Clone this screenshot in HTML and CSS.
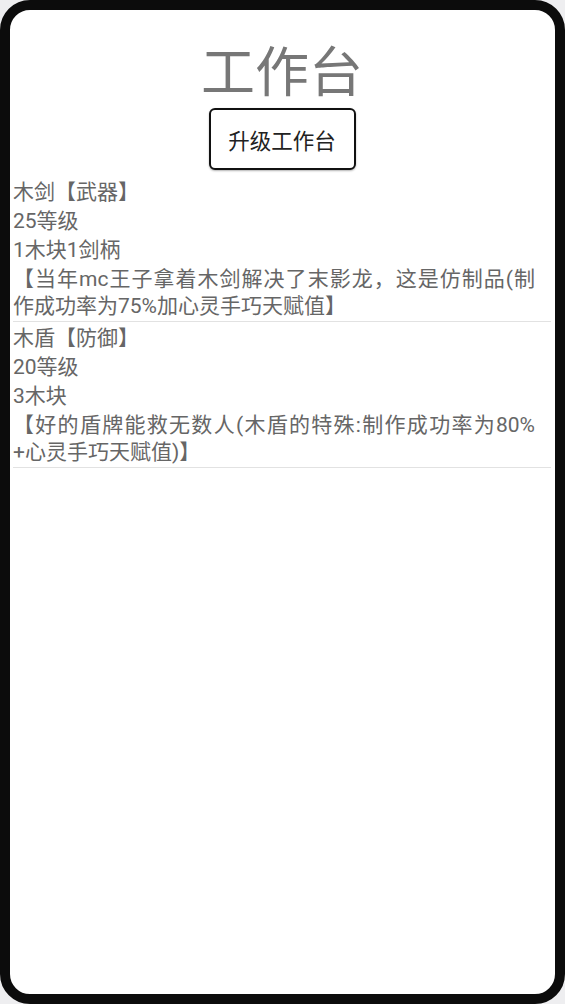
FILE: index.html
```html
<!DOCTYPE html>
<html lang="zh">
<head>
<meta charset="utf-8">
<title>工作台</title>
<link rel="stylesheet" href="styles.css">
</head>
<body>
<div class="frame">
  <div class="screen">
    <h1 class="title">工作台</h1>
    <div class="actions"><button class="upgrade">升级工作台</button></div>
    <div class="item">
      <div class="line">木剑【武器】</div>
      <div class="line">25等级</div>
      <div class="line">1木块1剑柄</div>
      <div class="line desc"><span class="row full">【当年mc王子拿着木剑解决了末影龙，这是仿制品(制</span><span class="row">作成功率为75%加心灵手巧天赋值】</span></div>
    </div>
    <div class="item">
      <div class="line">木盾【防御】</div>
      <div class="line">20等级</div>
      <div class="line">3木块</div>
      <div class="line desc"><span class="row full">【好的盾牌能救无数人(木盾的特殊:制作成功率为80%</span><span class="row">+心灵手巧天赋值)】</span></div>
    </div>
  </div>
</div>
</body>
</html>
```
FILE: styles.css
```css
html, body {
  margin: 0;
  padding: 0;
  background: #eeeef0;
}
body {
  font-family: Roboto, "Noto Sans CJK SC", sans-serif;
}
.frame {
  width: 565px;
  height: 1004px;
  box-sizing: border-box;
  border: 10px solid #0c0c0c;
  border-radius: 30px;
  background: #ffffff;
  overflow: hidden;
}
.screen {
  padding: 0 4px 0 3px;
}
.title {
  margin: 0;
  padding-top: 29px;
  font-size: 54px;
  line-height: 69px;
  font-weight: normal;
  color: #777777;
  text-align: center;
}
.actions {
  display: flex;
  justify-content: center;
  margin-bottom: 6px;
}
.upgrade {
  width: 147px;
  height: 62px;
  box-sizing: border-box;
  border: 2px solid #111111;
  border-radius: 6px;
  background: #ffffff;
  box-shadow: 0 1px 2px rgba(0,0,0,0.3);
  font-family: Roboto, "Noto Sans CJK SC", sans-serif;
  font-size: 21.5px;
  color: #222222;
  padding: 0;
}
.item {
  padding: 3px 0 1px;
  border-bottom: 1px solid #e2e2e2;
}
.line {
  font-size: 21px;
  line-height: 27px;
  color: #666666;
  margin-bottom: 2px;
  text-spacing-trim: space-all;
}
.line:last-child {
  margin-bottom: 0;
}
.desc {
  padding-right: 16px;
}
.row {
  display: block;
  white-space: nowrap;
}
.row.full {
  text-align: justify;
  text-align-last: justify;
}
```
